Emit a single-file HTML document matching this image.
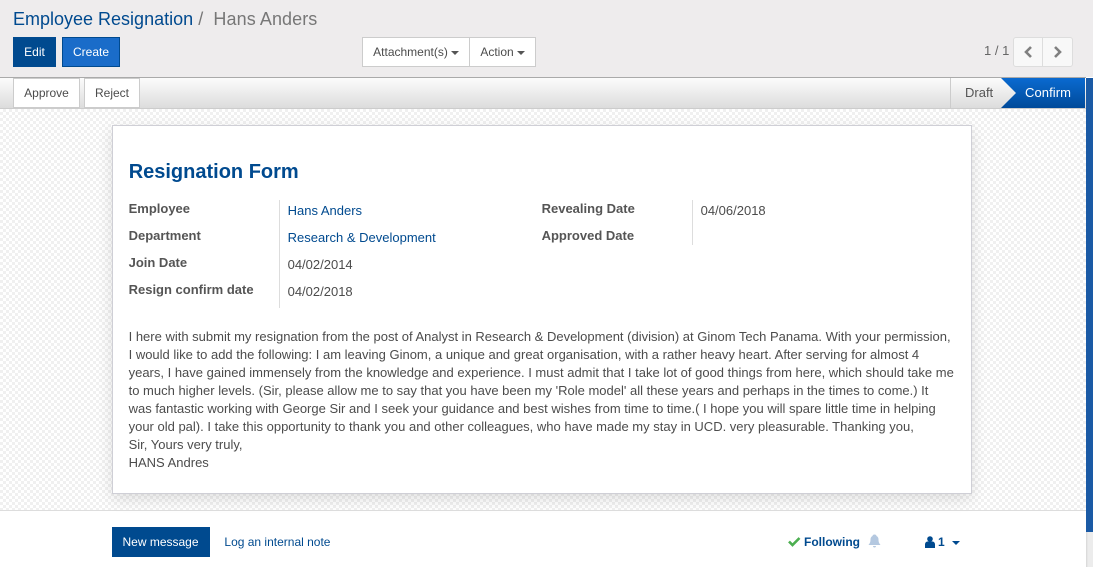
<!DOCTYPE html>
<html><head><meta charset="utf-8">
<style>
html,body{margin:0;padding:0}
body{width:1093px;height:567px;position:relative;overflow:hidden;background:#fff;font-family:"Liberation Sans",sans-serif;font-size:13px;color:#4c4c4c}
.a{position:absolute;white-space:nowrap;line-height:18px}
.btn{position:absolute;box-sizing:border-box;text-align:center;font-size:12px;line-height:28px;height:30px}
.lab{font-weight:bold;color:#555}
.lnk{color:#004a8f}
.car{display:inline-block;width:0;height:0;border-left:4px solid transparent;border-right:4px solid transparent;border-top:4px solid #555;vertical-align:middle;margin-left:3px}
</style></head>
<body>
<div style="position:absolute;left:0;top:0;width:1093px;height:77px;background:#eeeced"></div>
<div class="a" style="left:13px;top:7px;font-size:18px;line-height:24px;color:#004a8f">Employee Resignation<span style="color:#777;letter-spacing:.08px"> /&nbsp; Hans Anders</span></div>
<div class="btn" style="left:13px;top:37px;width:43px;background:#004a8f;border:1px solid #004a8f;color:#fff">Edit</div>
<div class="btn" style="left:62px;top:37px;width:58px;background:#1a6cc9;border:1px solid #004a8f;color:#fff">Create</div>
<div class="btn" style="left:362px;top:37px;width:108px;background:#fff;border:1px solid #ccc;color:#4c4c4c">Attachment(s)<span class="car"></span></div>
<div class="btn" style="left:469px;top:37px;width:67px;background:#fff;border:1px solid #ccc;color:#4c4c4c">Action<span class="car"></span></div>
<div class="a" style="left:984px;top:42px;color:#666">1 / 1</div>
<div style="position:absolute;left:1013px;top:37px;width:60px;height:30px;box-sizing:border-box;background:#f8f8f8;border:1px solid #ddd;border-radius:3px"></div>
<div style="position:absolute;left:1042px;top:37px;width:1px;height:30px;background:#ddd"></div>
<svg style="position:absolute;left:1013px;top:37px" width="60" height="30" fill="none" stroke="#808080" stroke-width="2.6"><path d="M18 10l-5 5 5 5M42 10l5 5-5 5"/></svg>

<div style="position:absolute;left:0;top:77px;width:1086px;height:32px;box-sizing:border-box;border-top:1px solid #aaa;border-bottom:1px solid #ccc;background:linear-gradient(#fcfcfc,#dcdcdc)"></div>
<div class="btn" style="left:13px;top:78px;width:67px;height:30px;background:#fff;border:1px solid #ccc;color:#4c4c4c">Approve</div>
<div class="btn" style="left:84px;top:78px;width:56px;height:30px;background:#fff;border:1px solid #ccc;color:#4c4c4c">Reject</div>
<div style="position:absolute;left:950px;top:78px;width:1px;height:30px;background:#ccc"></div>
<div class="a" style="left:965px;top:84px;color:#555">Draft</div>
<svg style="position:absolute;left:1001px;top:78px" width="85" height="30"><defs><linearGradient id="g" x1="0" y1="0" x2="0" y2="1"><stop offset="0" stop-color="#0a6ad0"/><stop offset="1" stop-color="#004a9a"/></linearGradient></defs><path d="M0 0H84V30H0L15 15Z" fill="url(#g)"/></svg>
<div class="a" style="left:1025px;top:84px;color:#fff;letter-spacing:.08px">Confirm</div>

<div style="position:absolute;left:0;top:109px;width:1086px;height:401px;background-color:#fff;background-image:conic-gradient(#f0f0f0 25%,#fff 0 50%,#f0f0f0 0 75%,#fff 0);background-size:6px 6px"></div>
<div style="position:absolute;left:0;top:510px;width:1086px;height:1px;background:#ddd"></div>

<div style="position:absolute;left:112px;top:125px;width:860px;height:369px;box-sizing:border-box;background:#fff;border:1px solid #cfcfd6;box-shadow:0 5px 14px rgba(0,0,0,.12)"></div>
<div class="a" style="left:128.700px;top:159px;font-size:20px;line-height:26px;font-weight:bold;color:#004a8f">Resignation Form</div>

<div class="a lab" style="left:128.600px;top:200px">Employee</div>
<div class="a lab" style="left:128.600px;top:227px">Department</div>
<div class="a lab" style="left:128.600px;top:254px">Join Date</div>
<div class="a lab" style="left:128.600px;top:281px">Resign confirm date</div>
<div style="position:absolute;left:279px;top:200px;width:1px;height:108px;background:#ddd"></div>
<div class="a lnk" style="left:287.600px;top:202px">Hans Anders</div>
<div class="a lnk" style="left:287.600px;top:229px">Research &amp; Development</div>
<div class="a" style="left:287.600px;top:256px">04/02/2014</div>
<div class="a" style="left:287.600px;top:283px">04/02/2018</div>

<div class="a lab" style="left:541.600px;top:200px">Revealing Date</div>
<div class="a lab" style="left:541.600px;top:227px">Approved Date</div>
<div style="position:absolute;left:692px;top:200px;width:1px;height:45px;background:#ddd"></div>
<div class="a" style="left:700.600px;top:202px">04/06/2018</div>

<div class="a" style="left:128.600px;top:328px">I here with submit my resignation from the post of Analyst in Research &amp; Development (division) at Ginom Tech Panama. With your permission,</div>
<div class="a" style="left:128.600px;top:346px">I would like to add the following: I am leaving Ginom, a unique and great organisation, with a rather heavy heart. After serving for almost 4</div>
<div class="a" style="left:128.600px;top:364px">years, I have gained immensely from the knowledge and experience. I must admit that I take lot of good things from here, which should take me</div>
<div class="a" style="left:128.600px;top:382px">to much higher levels. (Sir, please allow me to say that you have been my 'Role model' all these years and perhaps in the times to come.) It</div>
<div class="a" style="left:128.600px;top:400px">was fantastic working with George Sir and I seek your guidance and best wishes from time to time.( I hope you will spare little time in helping</div>
<div class="a" style="left:128.600px;top:418px">your old pal). I take this opportunity to thank you and other colleagues, who have made my stay in UCD. very pleasurable. Thanking you,</div>
<div class="a" style="left:128.600px;top:436px">Sir, Yours very truly,</div>
<div class="a" style="left:128.600px;top:454px">HANS Andres</div>

<div class="btn" style="left:112px;top:527px;width:98px;background:#004a8f;border:1px solid #004a8f;color:#fff;text-indent:-1px">New message</div>
<div class="a lnk" style="left:224.400px;top:533px;font-size:12px">Log an internal note</div>
<svg style="position:absolute;left:788px;top:536px" width="13" height="12" fill="none" stroke="#4caf50" stroke-width="2.600"><path d="M1 5.500l3.500 3.500L11.500 2"/></svg>
<div class="a" style="left:804px;top:533px;font-size:12px;font-weight:bold;color:#004a8f">Following</div>
<svg style="position:absolute;left:868px;top:534px" width="13" height="14" fill="#b4c8e0"><path d="M6.500 .5C8 .5 8.500 1.500 8.500 2c1.500.7 2 2 2 3.500 0 3 1 4.300 2 5.500H.5c1-1.200 2-2.500 2-5.500C2.500 4 3 2.700 4.500 2 4.500 1.500 5 .5 6.500 .5ZM5 12h3c0 1-.7 1.500-1.500 1.500S5 13 5 12Z"/></svg>
<svg style="position:absolute;left:925px;top:536px" width="10" height="12" fill="#004a8f"><circle cx="5" cy="3" r="2.800"/><path d="M0 12V8.500C0 6.500 1.500 5.500 2.500 5.500h5C8.500 5.500 10 6.500 10 8.500V12Z"/></svg>
<div class="a" style="left:938px;top:533px;font-size:12px;font-weight:bold;color:#004a8f">1</div>
<div style="position:absolute;left:952px;top:541px;width:0;height:0;border-left:4px solid transparent;border-right:4px solid transparent;border-top:4px solid #004a8f"></div>

<div style="position:absolute;left:1086px;top:532px;width:7px;height:35px;background:linear-gradient(90deg,#d6d6d6,#ececec 30%,#ececec)"></div>
<div style="position:absolute;left:1086px;top:78px;width:7px;height:454px;background:#1a5aa5"></div>
</body></html>
